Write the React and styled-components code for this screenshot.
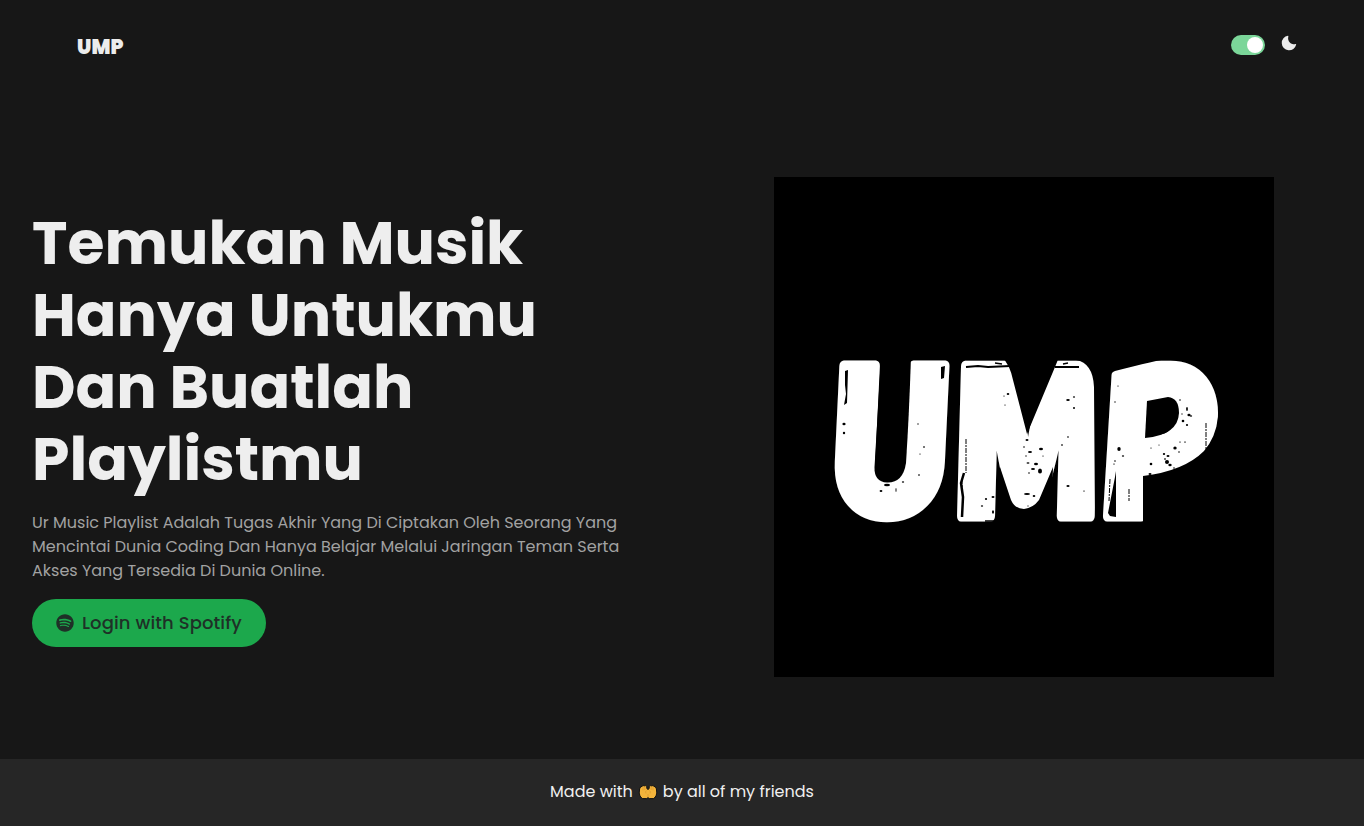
import React from "react";
import styled, { createGlobalStyle } from "styled-components";
import { FaSpotify } from "react-icons/fa";

const GlobalStyle = createGlobalStyle`
  *, *::before, *::after { box-sizing: border-box; }
  body {
    margin: 0;
    background: #171717;
    color: #ececec;
    font-family: Poppins, Inter, "Liberation Sans", sans-serif;
    font-size: 16px;
    line-height: 24px;
  }
  h1, p { margin: 0; }
`;

const Page = styled.div`
  display: flex;
  flex-direction: column;
  height: 826px;
  overflow: hidden;
`;

const Header = styled.header`
  display: flex;
  align-items: center;
  justify-content: space-between;
  height: 90px;
  padding: 0 67px 0 77px;
`;

const Brand = styled.span`
  font-size: 20px;
  font-weight: 900;
  padding-top: 4px;
`;

const ThemeControls = styled.div`
  display: flex;
  align-items: center;
  gap: 16px;
`;

const MoonIcon = styled.svg`
  display: block;
  width: 16px;
  height: 16px;
  margin-bottom: 4px;
  fill: currentColor;
`;

const Switch = styled.button`
  display: flex;
  justify-content: flex-end;
  width: 34px;
  height: 20px;
  padding: 2px;
  border: 0;
  border-radius: 10px;
  background: #7bd699;
`;

const Thumb = styled.span`
  width: 16px;
  height: 16px;
  border-radius: 50%;
  background: #fff;
`;

const Hero = styled.main`
  display: flex;
  flex: 1;
  align-items: flex-start;
  justify-content: space-between;
  padding: 87px 90px 0 32px;
`;

const Intro = styled.section`
  display: flex;
  flex-direction: column;
  align-items: flex-start;
  padding-top: 30px;
`;

const Title = styled.h1`
  font-size: 60px;
  font-weight: 700;
  line-height: 72px;
  color: #eeeeee;
`;

const Line = styled.span`
  display: block;
  white-space: nowrap;
`;

const Description = styled.p`
  margin-top: 16px;
  color: #a2a2a2;
`;

const LoginButton = styled.button`
  display: flex;
  align-items: center;
  gap: 8px;
  width: 234px;
  height: 48px;
  margin-top: 16px;
  padding: 0 24px;
  border: 0;
  border-radius: 24px;
  background: #1ca84c;
  color: #1f3027;
  font: 500 18px/24px Poppins, Inter, "Liberation Sans", sans-serif;
  letter-spacing: 0.11px;
  svg { flex: none; }
`;

const Cover = styled.svg`
  display: block;
  width: 500px;
  height: 500px;
  background: #000;
`;

const Letter = styled.text`
  font-family: Inter, sans-serif;
  font-weight: 900;
  font-size: 206px;
  fill: #fff;
  stroke: #fff;
  stroke-width: 11px;
  stroke-linejoin: round;
`;

const Footer = styled.footer`
  display: flex;
  align-items: center;
  justify-content: center;
  height: 67px;
  padding-bottom: 2px;
  background: #262626;
  color: #f0f0f0;
`;

const PalmsIcon = styled.svg`
  width: 20px;
  height: 18px;
  margin: 0 5px;
`;

// Worn spots: [x, y, rx, ry] in cover coordinates
const SPOTS = [
  [70, 247, 1.6, 1.2], [70, 256, 1.2, 1.2], [144, 247, 0.7, 0.7], [150, 270, 1, 0.8], [146, 277, 0.7, 0.6],
  [113, 308, 3, 1.3], [107, 314, 1.4, 1], [129, 305, 1.2, 0.7], [145, 298, 0.7, 1], [122, 313, 0.5, 2],
  [234, 217, 1.3, 1], [230, 219, 0.7, 0.6], [231, 228, 0.7, 0.6], [294, 223, 1.8, 1], [300, 220, 1.1, 0.8],
  [300, 231, 1, 0.9], [294, 260, 0.9, 0.7], [288, 268, 1, 0.7], [253, 263, 1.5, 1], [250, 270, 0.8, 0.7],
  [256, 275, 2, 1], [267, 272, 2, 1.3], [252, 279, 0.7, 0.7], [269, 279, 0.7, 0.5], [254, 286, 1.5, 0.8],
  [262, 287, 2, 1.2], [259, 292, 2, 1], [266, 294, 2, 2.5], [255, 296, 0.8, 0.8], [253, 317, 3, 1.1],
  [260, 319, 1.3, 0.9], [254, 329, 0.5, 0.8], [294, 309, 1.6, 1], [310, 314, 0.8, 0.6], [219, 320, 1.5, 1],
  [212, 322, 1.1, 1], [208, 329, 1.2, 0.8], [219, 335, 1, 1.7], [344, 209, 0.7, 0.6], [341, 225, 0.7, 0.7],
  [406, 223, 0.8, 0.8], [413, 232, 0.9, 2], [415, 238, 1.6, 1.2], [417, 239, 1.2, 0.7], [409, 244, 1.3, 1.2],
  [413, 248, 1.1, 1], [408, 237, 0.6, 0.7], [406, 265, 0.8, 0.6], [401, 271, 1.7, 1.5], [405, 275, 0.8, 0.7],
  [411, 265, 1, 0.5], [390, 277, 1.2, 0.9], [394, 279, 1.5, 1], [393, 285, 2, 2], [396, 288, 1.7, 1.2],
  [400, 291, 0.8, 0.8], [391, 282, 1, 0.8], [377, 287, 1.3, 1.2], [377, 271, 0.7, 0.6], [345, 272, 1.7, 2],
  [349, 279, 1.2, 0.8], [341, 284, 0.6, 0.9], [340, 287, 0.8, 0.6], [376, 297, 1.5, 1], [385, 268, 0.6, 0.6],
];

function CoverArt() {
  return (
    <Cover viewBox="0 0 500 500" role="img">
      <Letter transform="translate(55 338) skewX(-2.700) scale(.785 .995)">U</Letter>
      <Letter transform="translate(180 339) skewX(-1.500) scale(.73 1)">M</Letter>
      <Letter transform="translate(325.500 339) skewX(-3.500) scale(.83 1)">P</Letter>
      <g fill="#000">
        {/* counters and trimmed corners */}
        <path d="M107 180 100.500 290Q100 305 113 305.500Q129 306 132 286Q135 240 137 180Z" />
        <path d="M228 180Q236 188 239 203L253 257 281 190 285 180Z" />
        <path d="M373 224 394 220Q405 221 405 236Q404 258 371 261Z" />
        <path d="M326 180H402Q380 184 341 194Q336.500 195 336.300 202L330 206Z" />
        <path d="M369 350V299Q410 294 430 274Q442 260 444 240H460V350Z" />
        <path d="M302 183Q319 186 320 210L321 345H326V180Z" />
        <path d="M226 290 237 323Q241 332 250 332Q259 331 265 323L279 290 277 350H226Z" />
        {SPOTS.map(([x, y, rx, ry]) => (
          <ellipse key={`${x}-${y}`} cx={x} cy={y} rx={rx} ry={ry} />
        ))}
        <path d="M71 194l3-1-1 33-3 2 2-11-1-9zM167 190l4-1-1 12-3 1zM341 300l1-6v46l-6-1-2-3z" />
      </g>
      <g fill="none" stroke="#000">
        <path d="M192 190l12-1 10 1 22-1M281 190h24" strokeWidth="1.8" />
        <path d="M190 296l-3 10 2 14-1 20" strokeWidth="2.5" />
        <path d="M192 262v34M188 302v12M355 312v12M336 302l-1 22M432 246v26" strokeWidth="1" strokeDasharray="5 1 2 1" />
        <path d="M221 186l7 1M289 187l5-1M211 344h12" strokeWidth="1.4" />
      </g>
    </Cover>
  );
}

function Palms() {
  return (
    <PalmsIcon viewBox="0 0 20 18" aria-hidden="true">
      <g fill="#f3b43b" stroke="#111" strokeWidth="1" strokeLinejoin="round">
        <path d="M10 6.500 8.800 5.500V3.400Q7.800 2 6.800 3 5.900 1.900 5 3 3.800 2.300 3.200 4 1.800 4 1.600 6L1.200 10Q1.300 13.200 4.200 15.600H8.800L10 14.600 11.200 15.600H15.800Q18.700 13.200 18.800 10L18.400 6Q18.200 4 16.800 4 16.200 2.300 15 3 14.100 1.900 13.200 3 12.200 2 11.200 3.400V5.500Z" />
      </g>
      <path d="M6.800 4v3M5 4.300v3M13.200 4v3M15 4.300v3M10 11v3M8.600 7.500Q7 8.500 8 10.500M11.400 7.500Q13 8.500 12 10.500" fill="none" stroke="#cf8a26" strokeWidth=".5" />
    </PalmsIcon>
  );
}

export default function App() {
  return (
    <Page>
      <GlobalStyle />
      <Header>
        <Brand>UMP</Brand>
        <ThemeControls>
          <Switch aria-label="Dark mode"><Thumb /></Switch>
          <MoonIcon viewBox="0 0 16 16" aria-hidden="true">
            <path d="M6.900 .8A7.300 7.300 0 1 0 15.200 9.600Q15.200 8.900 14.500 9.100A6 6 0 0 1 7.300 1.700Q7.600 .6 6.900 .8Z" />
          </MoonIcon>
        </ThemeControls>
      </Header>
      <Hero>
        <Intro>
          <Title>
            <Line>Temukan Musik</Line>
            <Line>Hanya Untukmu</Line>
            <Line>Dan Buatlah</Line>
            <Line>Playlistmu</Line>
          </Title>
          <Description>
            <Line>Ur Music Playlist Adalah Tugas Akhir Yang Di Ciptakan Oleh Seorang Yang</Line>
            <Line>Mencintai Dunia Coding Dan Hanya Belajar Melalui Jaringan Teman Serta</Line>
            <Line>Akses Yang Tersedia Di Dunia Online.</Line>
          </Description>
          <LoginButton>
            <FaSpotify size={18} />
            <Line>Login with Spotify</Line>
          </LoginButton>
        </Intro>
        <CoverArt />
      </Hero>
      <Footer>
        <Line>Made with</Line>
        <Palms />
        <Line>by all of my friends</Line>
      </Footer>
    </Page>
  );
}
